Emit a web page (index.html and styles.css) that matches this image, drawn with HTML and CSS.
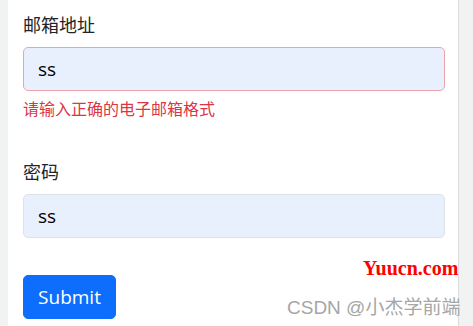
FILE: index.html
```html
<!DOCTYPE html>
<html lang="zh">
<head>
    <meta charset="UTF-8">
    <meta name="viewport" content="width=device-width, initial-scale=1.0">
    <title>表单验证</title>
    <link rel="stylesheet" href="styles.css">
</head>
<body>

    <!-- 表单区域 -->
    <div class="panel">
        <form class="form">
            <div class="field">
                <label class="form-label" for="email">邮箱地址</label>
                <input class="form-control is-invalid" id="email" type="text" value="ss">
                <div class="invalid-feedback">请输入正确的电子邮箱格式</div>
            </div>

            <div class="field">
                <label class="form-label" for="password">密码</label>
                <input class="form-control" id="password" type="text" value="ss">
            </div>

            <button type="button" class="btn">Submit</button>
        </form>

        <!-- 水印 -->
        <span class="mark-site">Yuucn.com</span>
        <span class="mark-author">CSDN @小杰学前端</span>
    </div>

</body>
</html>
```

FILE: styles.css
```css
body {
    margin: 0;
    padding: 0 0 0 8px;
    background-color: #f1f2f2;
    font-family: "Open Sans", "Noto Sans CJK SC", sans-serif;
    color: #212529;
}

.panel {
    position: relative;
    width: 451px;
    height: 326px;
    background-color: #ffffff;
    border-right: 1px solid #dcdcdc;
    box-sizing: border-box;
}

.form {
    padding: 12px 13px 0 15px;
}

.field {
    display: flex;
    flex-direction: column;
}

.field + .field {
    margin-top: 38px;
}

.form-label {
    font-size: 18px;
    line-height: 27px;
    margin-bottom: 8px;
}

.form-control {
    height: 44px;
    padding: 0 14px;
    font-family: "Open Sans", sans-serif;
    font-size: 19px;
    color: #000;
    background-color: #e8f0fe;
    border: 1px solid #dee2e6;
    border-radius: 5px;
    box-sizing: border-box;
    outline: none;
}

.form-control.is-invalid {
    border-color: #eba4ae;
}

.invalid-feedback {
    margin-top: 6px;
    font-size: 16px;
    line-height: 24px;
    color: #dc3545;
}

.btn {
    margin-top: 37px;
    width: 93px;
    height: 44px;
    padding: 0;
    font-family: "Open Sans", sans-serif;
    font-size: 19px;
    color: #ffffff;
    background-color: #0d6efd;
    border: 1px solid #0d6efd;
    border-radius: 5px;
    cursor: pointer;
}

.mark-site {
    position: absolute;
    left: 355px;
    top: 257px;
    font-family: "Liberation Serif", serif;
    font-weight: bold;
    font-size: 20px;
    color: #ff0000;
    white-space: nowrap;
}

.mark-author {
    position: absolute;
    left: 279px;
    top: 292px;
    font-family: "Liberation Sans", "Noto Sans CJK SC", sans-serif;
    font-size: 19px;
    color: #a6a6a6;
    white-space: nowrap;
}
```
